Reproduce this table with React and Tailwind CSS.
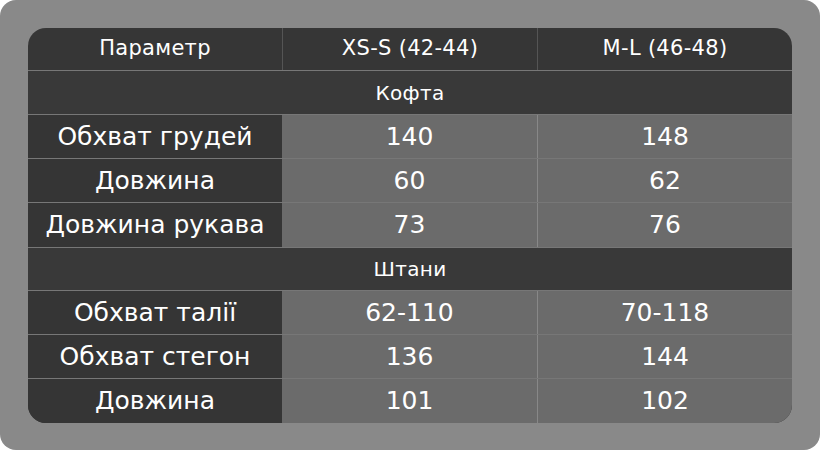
import React from 'react';

const sections = [
    {
        title: 'Кофта',
        rows: [
            ['Обхват грудей', '140', '148'],
            ['Довжина', '60', '62'],
            ['Довжина рукава', '73', '76'],
        ],
    },
    {
        title: 'Штани',
        rows: [
            ['Обхват талії', '62-110', '70-118'],
            ['Обхват стегон', '136', '144'],
            ['Довжина', '101', '102'],
        ],
    },
];

const App = () => {
    return (
        <div className="w-[820px] h-[450px] bg-white" style={{ fontFamily: '"DejaVu Sans", "Noto Sans", sans-serif' }}>
            <div className="w-full h-full bg-[#898989] rounded-[16px] p-[28px]">
                <div className="rounded-[18px] overflow-hidden bg-[#363636] text-white">
                    {/* Header */}
                    <div className="grid grid-cols-[254px_255px_255px] h-[43px] text-[21px] tracking-[0.3px] border-b border-[#777]">
                        <div className="flex items-center justify-center">Параметр</div>
                        <div className="flex items-center justify-center border-l border-[#555]">XS-S (42-44)</div>
                        <div className="flex items-center justify-center border-l border-[#555]">M-L (46-48)</div>
                    </div>

                    {sections.map((section, si) => (
                        <div key={section.title}>
                            <div className={`h-[44px] flex items-center justify-center text-[20px] tracking-[0.3px] bg-[#393939] border-b border-[#777] ${si > 0 ? 'border-t' : ''}`}>
                                {section.title}
                            </div>
                            {section.rows.map((row, ri) => (
                                <div
                                    key={row[0]}
                                    className={`grid grid-cols-[254px_255px_255px] h-[44px] text-[25px] ${ri < section.rows.length - 1 ? 'border-b border-[#777]' : ''}`}
                                >
                                    <div className="flex items-center justify-center bg-[#353535]">{row[0]}</div>
                                    <div className="flex items-center justify-center bg-[#6b6b6b]">{row[1]}</div>
                                    <div className="flex items-center justify-center bg-[#6b6b6b] border-l border-[#888]">{row[2]}</div>
                                </div>
                            ))}
                        </div>
                    ))}
                </div>
            </div>
        </div>
    );
};

export default App;
